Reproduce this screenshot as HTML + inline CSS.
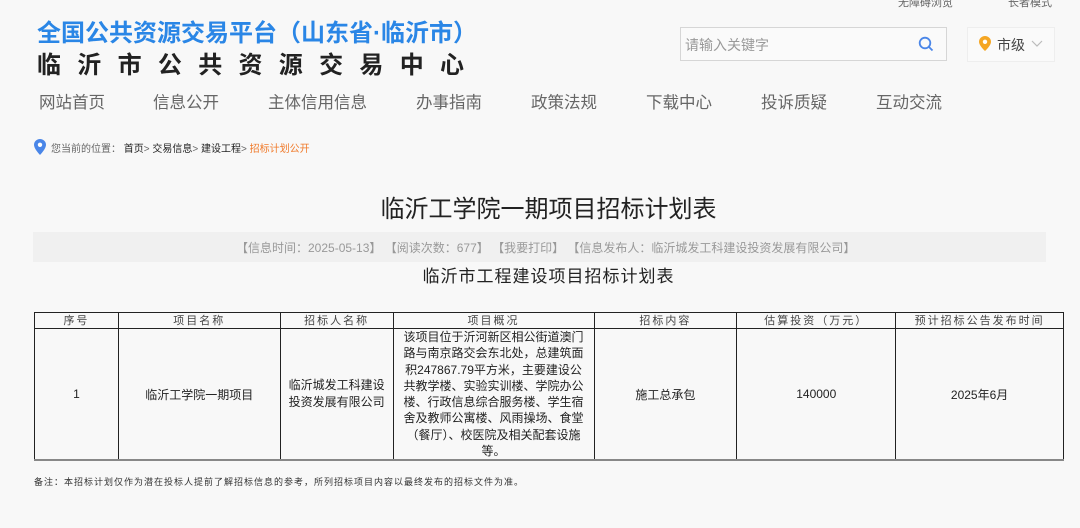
<!DOCTYPE html>
<html><head><meta charset="utf-8"><style>
*{margin:0;padding:0;box-sizing:border-box}
body{width:1080px;height:528px;overflow:hidden;background:#f8f8f8;font-family:"Liberation Sans","Noto Sans CJK SC",sans-serif;position:relative;color:#333}
.a{position:absolute;white-space:nowrap}
table{position:absolute;left:34px;top:312px;border-collapse:collapse;width:1030px;font-size:12px}
td{border:1px solid #222;text-align:center;vertical-align:middle;color:#222}
tr.h td{height:16px;font-size:11px;color:#444;letter-spacing:2px;line-height:14px}
tr.b td{height:131px;border-bottom:2px solid #888}
</style></head><body>
<div class="a" style="left:898px;top:-6px;font-size:11px;color:#666">无障碍浏览</div>
<div class="a" style="left:1008px;top:-6px;font-size:11px;color:#666">长者模式</div>
<div class="a" style="left:37px;top:13px;font-size:24px;font-weight:bold;color:#2a86e6">全国公共资源交易平台（山东省·临沂市）</div>
<div class="a" style="left:37px;top:45px;font-size:24px;font-weight:bold;color:#222;letter-spacing:16.3px">临沂市公共资源交易中心</div>
<div class="a" style="left:680px;top:27px;width:267px;height:34px;border:1px solid #d6d6d6;background:#fafafa"></div>
<div class="a" style="left:685px;top:35px;font-size:14px;color:#999">请输入关键字</div>
<svg class="a" style="left:918px;top:36px" width="16" height="16" viewBox="0 0 16 16"><circle cx="7" cy="7" r="5.3" fill="none" stroke="#4a86e8" stroke-width="1.8"/><path d="M11 11l3.5 3.5" stroke="#4a86e8" stroke-width="1.8"/></svg>
<div class="a" style="left:967px;top:27px;width:88px;height:35px;border:1px solid #eee;background:#fafafa"></div>
<svg class="a" style="left:979px;top:36px" width="12" height="15" viewBox="0 0 12 15"><path d="M6 0C2.7 0 0 2.6 0 5.8 0 9.8 6 15 6 15s6-5.2 6-9.2C12 2.6 9.3 0 6 0z" fill="#f5a623"/><circle cx="6" cy="5.8" r="2.2" fill="#fff"/></svg>
<div class="a" style="left:997px;top:35px;font-size:14px;color:#444">市级</div>
<svg class="a" style="left:1031px;top:40px" width="12" height="8"><path d="M1 1l5 5 5-5" fill="none" stroke="#bbb" stroke-width="1.2"/></svg>
<div class="a" style="top:89px;left:0;font-size:16.5px;color:#666">
<span class="a" style="left:39px">网站首页</span><span class="a" style="left:153px">信息公开</span><span class="a" style="left:268px">主体信用信息</span><span class="a" style="left:416px">办事指南</span><span class="a" style="left:531px">政策法规</span><span class="a" style="left:646px">下载中心</span><span class="a" style="left:761px">投诉质疑</span><span class="a" style="left:876px">互动交流</span></div>
<svg class="a" style="left:34px;top:139px" width="12" height="16" viewBox="0 0 12 16"><path d="M6 0C2.7 0 0 2.6 0 5.8 0 10 6 16 6 16s6-6 6-10.2C12 2.6 9.3 0 6 0z" fill="#4a86e8"/><circle cx="6" cy="5.8" r="2.2" fill="#fff"/></svg>
<div class="a" style="left:51px;top:140px;font-size:10px;color:#666">您当前的位置：<span style="color:#222">&nbsp;首页</span>&gt; <span style="color:#222">交易信息</span>&gt; <span style="color:#222">建设工程</span>&gt; <span style="color:#f07a2a">招标计划公开</span></div>
<div class="a" style="left:0;width:1097px;top:189px;text-align:center;font-size:24px;color:#222">临沂工学院一期项目招标计划表</div>
<div class="a" style="left:33px;top:232px;width:1013px;height:30px;background:#f0f0f0"></div>
<div class="a" style="left:236px;top:239px;font-size:12px;color:#999;word-spacing:0">【信息时间：2025-05-13】 【阅读次数：677】 【我要打印】 【信息发布人：临沂城发工科建设投资发展有限公司】</div>
<div class="a" style="left:0;width:1097px;top:262px;text-align:center;font-size:17px;color:#222;letter-spacing:1px">临沂市工程建设项目招标计划表</div>
<table>
<colgroup><col style="width:84px"><col style="width:162px"><col style="width:113px"><col style="width:201px"><col style="width:143px"><col style="width:159px"><col style="width:168px"></colgroup>
<tr class="h"><td>序号</td><td>项目名称</td><td>招标人名称</td><td>项目概况</td><td>招标内容</td><td>估算投资（万元）</td><td>预计招标公告发布时间</td></tr>
<tr class="b"><td>1</td><td>临沂工学院一期项目</td><td style="line-height:17px">临沂城发工科建设<br>投资发展有限公司</td><td style="line-height:16.3px;padding:0 6px;font-size:12px;white-space:nowrap">该项目位于沂河新区相公街道澳门<br>路与南京路交会东北处，总建筑面<br>积247867.79平方米，主要建设公<br>共教学楼、实验实训楼、学院办公<br>楼、行政信息综合服务楼、学生宿<br>舍及教师公寓楼、风雨操场、食堂<br>（餐厅）、校医院及相关配套设施<br>等。</td><td>施工总承包</td><td>140000</td><td>2025年6月</td></tr>
</table>
<div class="a" style="left:34px;top:475px;font-size:9px;color:#333;letter-spacing:1px">备注：本招标计划仅作为潜在投标人提前了解招标信息的参考，所列招标项目内容以最终发布的招标文件为准。</div>
</body></html>
